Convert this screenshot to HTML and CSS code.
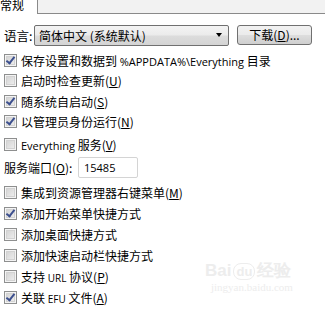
FILE: index.html
```html
<!DOCTYPE html>
<html>
<head>
<meta charset="utf-8">
<link rel="stylesheet" href="styles.css">
</head>
<body>
<div class="page">
  <div class="tabs">
    <div class="tab-active">常规</div>
    <div class="tab-rest"></div>
  </div>
  <div class="lang-row">
    <span class="label">语言:</span>
    <div class="combo"><span class="combo-text">简体中文 (系统默认)</span><span class="arrow"></span></div>
    <div class="btn">下载(<u>D</u>)...</div>
  </div>
  <div class="list">
    <div class="row r1"><span class="cb on"></span><span>保存设置和数据到 <span class="lat">%APPDATA%\Everything</span> 目录</span></div>
    <div class="row"><span class="cb"></span><span>启动时检查更新(<u>U</u>)</span></div>
    <div class="row"><span class="cb on"></span><span>随系统自启动(<u>S</u>)</span></div>
    <div class="row"><span class="cb on"></span><span>以管理员身份运行(<u>N</u>)</span></div>
    <div class="row r5"><span class="cb"></span><span><span class="lat">Everything</span> 服务(<u>V</u>)</span></div>
    <div class="row port-row"><span class="port-label">服务端口(<u>O</u>):</span><div class="port-input">15485</div></div>
    <div class="row r7"><span class="cb"></span><span>集成到资源管理器右键菜单(<u>M</u>)</span></div>
    <div class="row"><span class="cb on"></span><span>添加开始菜单快捷方式</span></div>
    <div class="row"><span class="cb"></span><span>添加桌面快捷方式</span></div>
    <div class="row"><span class="cb"></span><span>添加快速启动栏快捷方式</span></div>
    <div class="row"><span class="cb"></span><span>支持 <span class="small">URL</span> 协议(<u>P</u>)</span></div>
    <div class="row"><span class="cb on"></span><span>关联 <span class="small">EFU</span> 文件(<u>A</u>)</span></div>
  </div>
  <div class="watermark">
    <div class="wm-top">Bai<span class="wm-du">du</span>经验</div>
    <div class="wm-bot">jingyan.baidu.com</div>
  </div>
</div>
</body>
</html>
```
FILE: styles.css
```css
html, body {
  margin: 0;
  padding: 0;
  background: #ffffff;
}
.page {
  position: relative;
  width: 325px;
  height: 309px;
  overflow: hidden;
  font-family: "Noto Sans CJK SC", "Noto Sans", sans-serif;
  font-size: 12px;
  color: #000;
}
.tabs {
  display: flex;
  height: 14px;
}
.tab-active {
  width: 37px;
  line-height: 12px;
  margin-top: -1px;
  font-size: 12px;
  padding-left: 0;
}
.tab-rest {
  flex: 1;
  height: 13px;
  border-left: 1px solid #8a8a8a;
  border-bottom: 1px solid #8a8a8a;
  background: #f2f2f2;
}
.lang-row {
  display: flex;
  align-items: center;
  height: 22px;
  margin-top: 10px;
}
.label {
  width: 34px;
  padding-left: 4px;
  box-sizing: border-box;
  font-size: 12.5px;
}
.combo {
  width: 195px;
  height: 21px;
  box-sizing: border-box;
  border: 1px solid #707070;
  border-radius: 2px;
  background: linear-gradient(#f4f4f4 0%, #ebebeb 48%, #dcdcdc 52%, #d4d4d4 100%);
  display: flex;
  align-items: center;
  justify-content: space-between;
  padding: 0 4px 0 4px;
}
.combo-text {
  font-size: 12px;
  line-height: 19px;
}
.arrow {
  width: 0;
  height: 0;
  border-left: 3.5px solid transparent;
  border-right: 3.5px solid transparent;
  border-top: 4px solid #000;
  margin-right: 2px;
}
.btn {
  margin-left: 8px;
  width: 75px;
  height: 20px;
  box-sizing: border-box;
  border: 1px solid #707070;
  border-radius: 3px;
  background: linear-gradient(#f2f2f2 0%, #ebebeb 48%, #dddddd 52%, #cfcfcf 100%);
  display: flex;
  align-items: center;
  justify-content: center;
  font-size: 12px;
  line-height: 18px;
}
.list {
  display: flex;
  flex-direction: column;
  margin-top: 4px;
}
.row {
  display: flex;
  align-items: center;
  height: 20.5px;
  white-space: nowrap;
}
.r5 {
  margin-top: 1.5px;
  height: 21px;
}
.port-row {
  margin-top: 2px;
  height: 21px;
}
.r7 {
  margin-top: 4px;
}
.r7, .r7 ~ .row {
  height: 21px;
}
.cb {
  width: 13px;
  height: 13px;
  box-sizing: border-box;
  margin-left: 4px;
  margin-right: 4px;
  border: 1px solid #8e8f8f;
  background: #f4f4f4;
  box-shadow: inset 0 0 0 1px #f4f4f4, inset 0 0 0 2px #d2d2d2;
  background-image: linear-gradient(135deg, #cfcfcf, #f2f2f2);
  background-clip: content-box;
  padding: 2px;
  position: relative;
  flex: none;
}
.cb.on::after {
  content: "";
  position: absolute;
  left: 3px;
  top: 0px;
  width: 3px;
  height: 7px;
  border-right: 2px solid #3c4f8e;
  border-bottom: 2px solid #3c4f8e;
  transform: rotate(38deg);
}
.lat {
  font-family: "Open Sans", "Noto Sans", sans-serif;
  font-size: 11px;
}
.small {
  font-family: "Open Sans", "Noto Sans", sans-serif;
  font-size: 10px;
}
u {
  text-decoration: underline;
  text-underline-offset: 1px;
}
.port-label {
  padding-left: 4px;
  width: 78px;
  box-sizing: border-box;
  font-size: 12px;
}
.port-input {
  width: 60px;
  height: 21px;
  box-sizing: border-box;
  border: 1px solid #d4d4d4;
  border-radius: 2px;
  padding-left: 5px;
  font-family: "Open Sans", "Noto Sans", sans-serif;
  font-size: 11px;
  line-height: 19px;
}
.watermark {
  position: absolute;
  left: 205px;
  top: 262px;
  color: #ededed;
  font-family: "Liberation Sans", sans-serif;
}
.wm-top {
  font-size: 17px;
  font-weight: bold;
  line-height: 18px;
}
.wm-du {
  border: 1px solid #ededed;
  border-radius: 8px;
  padding: 0 2px;
  margin: 0 2px;
  font-size: 13px;
}
.wm-bot {
  font-family: "Liberation Serif", serif;
  font-size: 11px;
  line-height: 12px;
  padding-left: 6px;
}
```
